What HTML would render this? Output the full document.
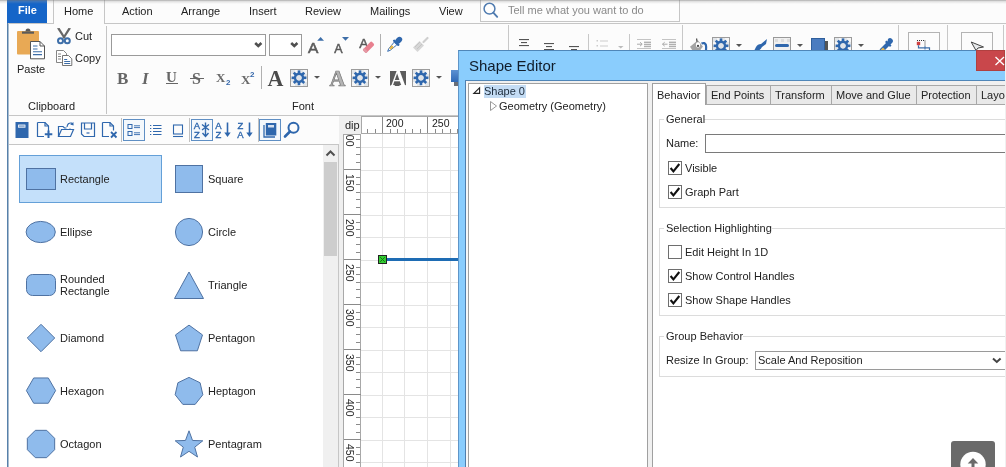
<!DOCTYPE html><html><head><meta charset="utf-8"><style>
*{box-sizing:border-box;margin:0;padding:0}
html,body{width:1006px;height:467px;overflow:hidden;background:#fcfcfc;font-family:"Liberation Sans",sans-serif;color:#222}
.a{position:absolute}
.t{position:absolute;white-space:nowrap;font-size:11px;line-height:13px;will-change:transform}
svg{position:absolute;overflow:visible;will-change:transform}
</style></head><body>
<div class="a" style="left:0px;top:0px;width:7px;height:467px;background:#fefefe"></div>
<div class="a" style="left:7px;top:23px;width:999px;height:1px;background:#c6c6c6"></div>
<div class="a" style="left:7px;top:0px;width:40px;height:23px;background:#1565c8"></div>
<div class="t" style="left:17.5px;top:5px;font-size:11px;line-height:11px;color:#fff;font-weight:bold">File</div>
<div class="a" style="left:53px;top:0px;width:52px;height:24px;background:#fcfcfc;border-left:1px solid #c6c6c6;border-right:1px solid #c6c6c6"></div>
<div class="t" style="left:63.8px;top:6px;font-size:11px;line-height:11px;">Home</div>
<div class="t" style="left:122px;top:6px;font-size:11px;line-height:11px;">Action</div>
<div class="t" style="left:181px;top:6px;font-size:11px;line-height:11px;">Arrange</div>
<div class="t" style="left:249px;top:6px;font-size:11px;line-height:11px;">Insert</div>
<div class="t" style="left:305px;top:6px;font-size:11px;line-height:11px;">Review</div>
<div class="t" style="left:370px;top:6px;font-size:11px;line-height:11px;">Mailings</div>
<div class="t" style="left:439px;top:6px;font-size:11px;line-height:11px;">View</div>
<div class="a" style="left:480px;top:0px;width:200px;height:22px;background:#fdfdfd;border:1px solid #c6c6c6;border-top:none"></div>
<svg style="left:483px;top:2px" width="18" height="18" viewBox="0 0 18 18"><circle cx="6.5" cy="6.7" r="5.4" fill="none" stroke="#4f7bb0" stroke-width="1.5"/><line x1="10.3" y1="10.6" x2="14.2" y2="14.8" stroke="#4f7bb0" stroke-width="1.9" stroke-linecap="round"/></svg>
<div class="t" style="left:507.5px;top:5px;font-size:11px;line-height:11px;color:#8a8a8a">Tell me what you want to do</div>
<div class="a" style="left:7px;top:23px;width:1px;height:444px;background:#5680aa"></div>
<div class="a" style="left:8px;top:115px;width:998px;height:1px;background:#c6c6c6"></div>
<svg style="left:15px;top:27px" width="32" height="33" viewBox="0 0 32 33"><rect x="2" y="4" width="22" height="23.6" rx="1" fill="#e8a955"/><path d="M7 4.5 h12 v2.2 h-12z" fill="#5a5a5a"/><path d="M10.5 4.5 q0-3 2.5-3 q2.5 0 2.5 3z" fill="#5a5a5a"/><path d="M15.5 14.5 h9.5 l4.5 4.5 v12.8 h-14z" fill="#fff" stroke="#555" stroke-width="1"/><path d="M25 14.5 v4.5 h4.5" fill="none" stroke="#555" stroke-width="1"/><path d="M18 19h4.5M18 22h4.5M18 24.8h9M18 27.6h9" stroke="#3d6ea8" stroke-width="1.1"/></svg>
<div class="t" style="left:17px;top:64px;font-size:11px;line-height:11px;">Paste</div>
<svg style="left:55px;top:27px" width="18" height="18" viewBox="0 0 18 18"><path d="M2 1.2 L4.6 1 L10.6 10.8 L8.8 11.8z" fill="#666"/><path d="M16 1.2 L13.4 1 L7.4 10.8 L9.2 11.8z" fill="#666"/><circle cx="5.5" cy="13.8" r="2.5" fill="none" stroke="#3d6ea8" stroke-width="2"/><circle cx="12.3" cy="13.8" r="2.5" fill="none" stroke="#3d6ea8" stroke-width="2"/></svg>
<div class="t" style="left:75px;top:31px;font-size:11px;line-height:11px;">Cut</div>
<svg style="left:55px;top:49px" width="18" height="18" viewBox="0 0 18 18"><path d="M1.5 1.5 h7 l3 3 v9 h-10z" fill="#fff" stroke="#777" stroke-width="0.9"/><path d="M3 5h3M3 7.5h3M3 10h3" stroke="#777" stroke-width="0.9"/><path d="M7.5 6.5 h6 l3.3 3.3 v6.7 h-9.3z" fill="#fff" stroke="#666" stroke-width="0.9"/><path d="M9.2 10.5h3M9.2 12.5h6M9.2 14.5h6" stroke="#3d6ea8" stroke-width="1"/></svg>
<div class="t" style="left:75px;top:53px;font-size:11px;line-height:11px;">Copy</div>
<div class="t" style="left:28px;top:101px;font-size:11px;line-height:11px;">Clipboard</div>
<div class="a" style="left:106px;top:26px;width:1px;height:88px;background:#c4c4c4"></div>
<div class="a" style="left:111px;top:34px;width:155px;height:22px;background:#fff;border:1px solid #9a9a9a"></div>
<div class="a" style="left:269px;top:34px;width:33px;height:22px;background:#fff;border:1px solid #9a9a9a"></div>
<svg style="left:254px;top:42px" width="9" height="6" viewBox="0 0 9 6"><path d="M1.2 1 L4.3 3.9 L7.4 1" fill="none" stroke="#505050" stroke-width="2.6"/></svg>
<svg style="left:290px;top:42px" width="9" height="6" viewBox="0 0 9 6"><path d="M1.2 1 L4.3 3.9 L7.4 1" fill="none" stroke="#505050" stroke-width="2.6"/></svg>
<svg style="left:306px;top:36px" width="20" height="18" viewBox="0 0 20 18"><text x="2" y="16.6" font-family="Liberation Sans" font-size="15.5" fill="#5a5a5a" stroke="#5a5a5a" stroke-width="0.6">A</text><path d="M11.2 4.8 L14.6 1 L18 4.8z" fill="#3d6ea8"/></svg>
<svg style="left:332px;top:36px" width="20" height="18" viewBox="0 0 20 18"><text x="2.2" y="16.6" font-family="Liberation Sans" font-size="12.5" fill="#5a5a5a" stroke="#5a5a5a" stroke-width="0.5">A</text><path d="M10 1 L17 1 L13.5 4.8z" fill="#3d6ea8"/></svg>
<svg style="left:357px;top:35px" width="20" height="19" viewBox="0 0 20 19"><text x="2.3" y="12.5" font-family="Liberation Sans" font-size="13.5" fill="#5a5a5a" stroke="#5a5a5a" stroke-width="0.5">A</text><g transform="translate(11.6 12.2) rotate(-45)"><rect x="-6.2" y="-2.5" width="12.4" height="5" rx="1.6" fill="#e8808f"/><rect x="-6.2" y="-2.5" width="2.6" height="5" rx="1" fill="#e49aa6"/></g></svg>
<div class="a" style="left:380px;top:34px;width:1px;height:22px;background:#b0b0b0"></div>
<svg style="left:386px;top:36px" width="17" height="17" viewBox="0 0 17 17"><g transform="translate(8.6 8.4) rotate(45)"><rect x="-2.7" y="-9.6" width="5.4" height="7.5" rx="2.7" fill="#2f67ad"/><rect x="-3.9" y="-3.4" width="7.8" height="2.2" rx="0.6" fill="#2f67ad"/><path d="M-1.9 -1.2 H1.9 L1.1 7.2 L0 9.8 L-1.1 7.2z" fill="#fff" stroke="#2f67ad" stroke-width="0.9"/><path d="M-1.5 2.5 H1.5 L1 6.6 H-1z" fill="#e6b84c"/></g></svg>
<svg style="left:411px;top:36px" width="18" height="17" viewBox="0 0 18 17"><path d="M12.5 6 L16.5 2" stroke="#cfcfcf" stroke-width="2.2" stroke-linecap="round"/><path d="M2 11.5 L8.5 5 L13 9.5 L6.5 16z" fill="#d6d6d6"/><path d="M4 11 l5-5M6 13 l5-5" stroke="#c4c4c4" stroke-width="1"/></svg>
<div class="t" style="left:116.5px;top:70px;font-family:'Liberation Serif',serif;font-size:17px;line-height:17px;font-weight:bold;color:#666">B</div>
<div class="t" style="left:142.3px;top:70px;font-family:'Liberation Serif',serif;font-size:17px;line-height:17px;font-weight:bold;font-style:italic;color:#666">I</div>
<div class="t" style="left:165.8px;top:70px;font-family:'Liberation Serif',serif;font-size:15px;line-height:15px;font-weight:bold;color:#666">U</div>
<div class="a" style="left:166px;top:83px;width:12px;height:1px;background:#666"></div>
<div class="t" style="left:192.3px;top:71px;font-family:'Liberation Serif',serif;font-size:16px;line-height:16px;font-weight:bold;color:#666">S</div>
<div class="a" style="left:190px;top:78px;width:14px;height:1px;background:#666"></div>
<div class="t" style="left:215.8px;top:71px;font-family:'Liberation Serif',serif;font-size:13px;line-height:13px;font-weight:bold;color:#6a6a6a">X</div>
<div class="t" style="left:225.5px;top:79px;font-size:8px;line-height:8px;color:#3366aa;font-weight:bold">2</div>
<div class="t" style="left:240.8px;top:73px;font-family:'Liberation Serif',serif;font-size:13px;line-height:13px;font-weight:bold;color:#6a6a6a">X</div>
<div class="t" style="left:249.5px;top:71px;font-size:8px;line-height:8px;color:#3366aa;font-weight:bold">2</div>
<div class="a" style="left:261px;top:66px;width:1px;height:23px;background:#b0b0b0"></div>
<svg style="left:266px;top:66px" width="20" height="22" viewBox="0 0 20 22"><text x="1.6" y="19.7" font-family="Liberation Serif" font-size="22" fill="#4a4a4a" transform="scale(1 1.04)" font-weight="bold">A</text></svg>
<svg style="left:290px;top:69px" width="18" height="18" viewBox="0 0 18 18"><rect x="0.5" y="0.5" width="17" height="17" fill="#f6f6f6" stroke="#9c9c9c"/><rect x="1" y="1" width="4" height="4" fill="#e2e6ea"/><rect x="1" y="9" width="4" height="4" fill="#e2e6ea"/><rect x="5" y="5" width="4" height="4" fill="#e2e6ea"/><rect x="5" y="13" width="4" height="4" fill="#e2e6ea"/><rect x="9" y="1" width="4" height="4" fill="#e2e6ea"/><rect x="9" y="9" width="4" height="4" fill="#e2e6ea"/><rect x="13" y="5" width="4" height="4" fill="#e2e6ea"/><rect x="13" y="13" width="4" height="4" fill="#e2e6ea"/><g transform="translate(9 8.8)" fill="#2f67ad"><rect x="-1.3" y="-7.4" width="2.6" height="3.8" transform="rotate(0)"/><rect x="-1.3" y="-7.4" width="2.6" height="3.8" transform="rotate(45)"/><rect x="-1.3" y="-7.4" width="2.6" height="3.8" transform="rotate(90)"/><rect x="-1.3" y="-7.4" width="2.6" height="3.8" transform="rotate(135)"/><rect x="-1.3" y="-7.4" width="2.6" height="3.8" transform="rotate(180)"/><rect x="-1.3" y="-7.4" width="2.6" height="3.8" transform="rotate(225)"/><rect x="-1.3" y="-7.4" width="2.6" height="3.8" transform="rotate(270)"/><rect x="-1.3" y="-7.4" width="2.6" height="3.8" transform="rotate(315)"/><circle r="3.9" fill="none" stroke="#2f67ad" stroke-width="2.6"/></g><circle cx="9" cy="8.8" r="2.6" fill="#dfe3e8"/></svg>
<svg style="left:314px;top:76px" width="6" height="3" viewBox="0 0 6 3"><path d="M0 0 L6 0 L3 2.8z" fill="#555"/></svg>
<svg style="left:327px;top:66px" width="20" height="22" viewBox="0 0 20 22"><text x="2.4" y="19.7" font-family="Liberation Serif" font-size="22" fill="#b4b4b4" stroke="#7a7a7a" stroke-width=".7" transform="scale(1 1.04)" font-weight="bold">A</text></svg>
<svg style="left:351px;top:69px" width="18" height="18" viewBox="0 0 18 18"><rect x="0.5" y="0.5" width="17" height="17" fill="#f6f6f6" stroke="#9c9c9c"/><rect x="1" y="1" width="4" height="4" fill="#e2e6ea"/><rect x="1" y="9" width="4" height="4" fill="#e2e6ea"/><rect x="5" y="5" width="4" height="4" fill="#e2e6ea"/><rect x="5" y="13" width="4" height="4" fill="#e2e6ea"/><rect x="9" y="1" width="4" height="4" fill="#e2e6ea"/><rect x="9" y="9" width="4" height="4" fill="#e2e6ea"/><rect x="13" y="5" width="4" height="4" fill="#e2e6ea"/><rect x="13" y="13" width="4" height="4" fill="#e2e6ea"/><g transform="translate(9 8.8)" fill="#2f67ad"><rect x="-1.3" y="-7.4" width="2.6" height="3.8" transform="rotate(0)"/><rect x="-1.3" y="-7.4" width="2.6" height="3.8" transform="rotate(45)"/><rect x="-1.3" y="-7.4" width="2.6" height="3.8" transform="rotate(90)"/><rect x="-1.3" y="-7.4" width="2.6" height="3.8" transform="rotate(135)"/><rect x="-1.3" y="-7.4" width="2.6" height="3.8" transform="rotate(180)"/><rect x="-1.3" y="-7.4" width="2.6" height="3.8" transform="rotate(225)"/><rect x="-1.3" y="-7.4" width="2.6" height="3.8" transform="rotate(270)"/><rect x="-1.3" y="-7.4" width="2.6" height="3.8" transform="rotate(315)"/><circle r="3.9" fill="none" stroke="#2f67ad" stroke-width="2.6"/></g><circle cx="9" cy="8.8" r="2.6" fill="#dfe3e8"/></svg>
<svg style="left:375px;top:76px" width="6" height="3" viewBox="0 0 6 3"><path d="M0 0 L6 0 L3 2.8z" fill="#555"/></svg>
<div class="a" style="left:390px;top:71px;width:16px;height:15px;background:#5c5c5c"></div>
<svg style="left:388px;top:66px" width="20" height="22" viewBox="0 0 20 22"><text x="2.3" y="19.7" font-family="Liberation Serif" font-size="22" fill="#fff" transform="scale(1 1.04)" font-weight="bold">A</text></svg>
<svg style="left:412px;top:69px" width="18" height="18" viewBox="0 0 18 18"><rect x="0.5" y="0.5" width="17" height="17" fill="#f6f6f6" stroke="#9c9c9c"/><rect x="1" y="1" width="4" height="4" fill="#e2e6ea"/><rect x="1" y="9" width="4" height="4" fill="#e2e6ea"/><rect x="5" y="5" width="4" height="4" fill="#e2e6ea"/><rect x="5" y="13" width="4" height="4" fill="#e2e6ea"/><rect x="9" y="1" width="4" height="4" fill="#e2e6ea"/><rect x="9" y="9" width="4" height="4" fill="#e2e6ea"/><rect x="13" y="5" width="4" height="4" fill="#e2e6ea"/><rect x="13" y="13" width="4" height="4" fill="#e2e6ea"/><g transform="translate(9 8.8)" fill="#2f67ad"><rect x="-1.3" y="-7.4" width="2.6" height="3.8" transform="rotate(0)"/><rect x="-1.3" y="-7.4" width="2.6" height="3.8" transform="rotate(45)"/><rect x="-1.3" y="-7.4" width="2.6" height="3.8" transform="rotate(90)"/><rect x="-1.3" y="-7.4" width="2.6" height="3.8" transform="rotate(135)"/><rect x="-1.3" y="-7.4" width="2.6" height="3.8" transform="rotate(180)"/><rect x="-1.3" y="-7.4" width="2.6" height="3.8" transform="rotate(225)"/><rect x="-1.3" y="-7.4" width="2.6" height="3.8" transform="rotate(270)"/><rect x="-1.3" y="-7.4" width="2.6" height="3.8" transform="rotate(315)"/><circle r="3.9" fill="none" stroke="#2f67ad" stroke-width="2.6"/></g><circle cx="9" cy="8.8" r="2.6" fill="#dfe3e8"/></svg>
<svg style="left:436px;top:76px" width="6" height="3" viewBox="0 0 6 3"><path d="M0 0 L6 0 L3 2.8z" fill="#555"/></svg>
<div class="t" style="left:291.5px;top:101px;font-size:11px;line-height:11px;">Font</div>
<div class="a" style="left:451px;top:70px;width:7px;height:12px;background:linear-gradient(#5d92d2,#2f69b6)"></div>
<div class="a" style="left:454px;top:82px;width:4px;height:4px;background:#6a6f78"></div>
<div class="a" style="left:508px;top:25px;width:1px;height:25px;background:#c8c8c8"></div>
<svg style="left:519px;top:0px" width="10" height="60" viewBox="0 0 10 60"><rect x="0.0" y="39" width="10" height="1.1" fill="#555"/><rect x="2.0" y="42" width="6" height="1.1" fill="#555"/><rect x="0.0" y="45" width="10" height="1.1" fill="#555"/></svg>
<svg style="left:544px;top:0px" width="10" height="60" viewBox="0 0 10 60"><rect x="0.0" y="43" width="10" height="1.1" fill="#555"/><rect x="2.0" y="46" width="6" height="1.1" fill="#555"/><rect x="0.0" y="49" width="10" height="1.1" fill="#555"/></svg>
<svg style="left:569px;top:0px" width="10" height="60" viewBox="0 0 10 60"><rect x="0.0" y="46" width="10" height="1.1" fill="#555"/><rect x="2.0" y="49" width="6" height="1.1" fill="#555"/></svg>
<div class="a" style="left:588px;top:34px;width:1px;height:16px;background:#c8c8c8"></div>
<svg style="left:596px;top:38px" width="13" height="12" viewBox="0 0 13 12"><rect x="0.5" y="2" width="1.5" height="1.5" fill="#ccc"/><rect x="0.5" y="7" width="1.5" height="1.5" fill="#ccc"/><rect x="4" y="2.5" width="8" height="1" fill="#ccc"/><rect x="4" y="7.5" width="8" height="1" fill="#ccc"/></svg>
<svg style="left:617.5px;top:45.5px" width="6" height="3" viewBox="0 0 6 3"><path d="M0 0 L5.5 0 L2.75 2.6z" fill="#bbb"/></svg>
<div class="a" style="left:629px;top:34px;width:1px;height:16px;background:#c8c8c8"></div>
<svg style="left:636px;top:38px" width="16" height="12" viewBox="0 0 16 12"><rect x="1" y="1" width="14" height="1" fill="#c4c4c4"/><rect x="1" y="10" width="14" height="1" fill="#c4c4c4"/><rect x="8" y="3.6" width="7" height="1.5" fill="#b0b0b0"/><rect x="8" y="5.8" width="7" height="1.5" fill="#b0b0b0"/><rect x="8" y="8" width="7" height="1.2" fill="#b0b0b0"/><path d="M1 6.2h5M4 4.2l2.2 2L4 8.2" stroke="#aaa" fill="none" stroke-width="1"/></svg>
<svg style="left:662px;top:38px" width="16" height="12" viewBox="0 0 16 12"><rect x="0" y="1" width="14" height="1" fill="#c4c4c4"/><rect x="0" y="10" width="14" height="1" fill="#c4c4c4"/><rect x="7" y="3.6" width="7" height="1.5" fill="#b0b0b0"/><rect x="7" y="5.8" width="7" height="1.5" fill="#b0b0b0"/><rect x="7" y="8" width="7" height="1.2" fill="#b0b0b0"/><path d="M0.5 6.2h5M2.7 4.2L.5 6.2l2.2 2" stroke="#aaa" fill="none" stroke-width="1"/></svg>
<div class="a" style="left:682px;top:25px;width:1px;height:25px;background:#c8c8c8"></div>
<svg style="left:684px;top:34px" width="28" height="17" viewBox="0 0 28 17"><path d="M6 12.7 L13.8 6.2 L18.9 12.4 L16 16.5 L8.5 16.5z" fill="#a4a4a4"/><ellipse cx="14" cy="11" rx="2.1" ry="2.7" fill="#fff"/><circle cx="14" cy="11.9" r="1.1" fill="#444"/><path d="M12.6 4.5 L13 7.6" stroke="#444" stroke-width="1.2"/><path d="M17.5 9.6 q3.3-1.6 4.4 1.4 q.5 2 .1 5.5" stroke="#2f67ad" stroke-width="2.2" fill="none"/></svg>
<svg style="left:712px;top:37px" width="18" height="18" viewBox="0 0 18 18"><rect x="0.5" y="0.5" width="17" height="17" fill="#f6f6f6" stroke="#9c9c9c"/><rect x="1" y="1" width="4" height="4" fill="#e2e6ea"/><rect x="1" y="9" width="4" height="4" fill="#e2e6ea"/><rect x="5" y="5" width="4" height="4" fill="#e2e6ea"/><rect x="5" y="13" width="4" height="4" fill="#e2e6ea"/><rect x="9" y="1" width="4" height="4" fill="#e2e6ea"/><rect x="9" y="9" width="4" height="4" fill="#e2e6ea"/><rect x="13" y="5" width="4" height="4" fill="#e2e6ea"/><rect x="13" y="13" width="4" height="4" fill="#e2e6ea"/><g transform="translate(9 8.8)" fill="#2f67ad"><rect x="-1.3" y="-7.4" width="2.6" height="3.8" transform="rotate(0)"/><rect x="-1.3" y="-7.4" width="2.6" height="3.8" transform="rotate(45)"/><rect x="-1.3" y="-7.4" width="2.6" height="3.8" transform="rotate(90)"/><rect x="-1.3" y="-7.4" width="2.6" height="3.8" transform="rotate(135)"/><rect x="-1.3" y="-7.4" width="2.6" height="3.8" transform="rotate(180)"/><rect x="-1.3" y="-7.4" width="2.6" height="3.8" transform="rotate(225)"/><rect x="-1.3" y="-7.4" width="2.6" height="3.8" transform="rotate(270)"/><rect x="-1.3" y="-7.4" width="2.6" height="3.8" transform="rotate(315)"/><circle r="3.9" fill="none" stroke="#2f67ad" stroke-width="2.6"/></g><circle cx="9" cy="8.8" r="2.6" fill="#dfe3e8"/></svg>
<svg style="left:736px;top:43.5px" width="6" height="3" viewBox="0 0 6 3"><path d="M0 0 L6 0 L3 3z" fill="#555"/></svg>
<svg style="left:753px;top:39px" width="15" height="12" viewBox="0 0 15 12"><path d="M14 0 L13 5 L9 8 q-2 4-6 4 H0 q2-1 3-4 q1.5-3 5-3 z" fill="#2f67ad"/></svg>
<svg style="left:773px;top:37px" width="18" height="14" viewBox="0 0 18 14"><rect x="0.5" y="0.5" width="17" height="16" fill="#f0f0f0" stroke="#999"/><rect x="2" y="2" width="3" height="3" fill="#ddd"/><rect x="8" y="2" width="3" height="3" fill="#ddd"/><rect x="14" y="2" width="3" height="3" fill="#ddd"/><rect x="2" y="7" width="14" height="3" rx="1.5" fill="#2f67ad"/></svg>
<svg style="left:797px;top:43.5px" width="6" height="3" viewBox="0 0 6 3"><path d="M0 0 L6 0 L3 3z" fill="#555"/></svg>
<svg style="left:811px;top:38px" width="18" height="13" viewBox="0 0 18 13"><rect x="13" y="3" width="4" height="12" fill="#555"/><rect x="0.5" y="0.5" width="13" height="14" fill="#4a7cc0" stroke="#2f5f9c"/></svg>
<svg style="left:834px;top:37px" width="18" height="18" viewBox="0 0 18 18"><rect x="0.5" y="0.5" width="17" height="17" fill="#f6f6f6" stroke="#9c9c9c"/><rect x="1" y="1" width="4" height="4" fill="#e2e6ea"/><rect x="1" y="9" width="4" height="4" fill="#e2e6ea"/><rect x="5" y="5" width="4" height="4" fill="#e2e6ea"/><rect x="5" y="13" width="4" height="4" fill="#e2e6ea"/><rect x="9" y="1" width="4" height="4" fill="#e2e6ea"/><rect x="9" y="9" width="4" height="4" fill="#e2e6ea"/><rect x="13" y="5" width="4" height="4" fill="#e2e6ea"/><rect x="13" y="13" width="4" height="4" fill="#e2e6ea"/><g transform="translate(9 8.8)" fill="#2f67ad"><rect x="-1.3" y="-7.4" width="2.6" height="3.8" transform="rotate(0)"/><rect x="-1.3" y="-7.4" width="2.6" height="3.8" transform="rotate(45)"/><rect x="-1.3" y="-7.4" width="2.6" height="3.8" transform="rotate(90)"/><rect x="-1.3" y="-7.4" width="2.6" height="3.8" transform="rotate(135)"/><rect x="-1.3" y="-7.4" width="2.6" height="3.8" transform="rotate(180)"/><rect x="-1.3" y="-7.4" width="2.6" height="3.8" transform="rotate(225)"/><rect x="-1.3" y="-7.4" width="2.6" height="3.8" transform="rotate(270)"/><rect x="-1.3" y="-7.4" width="2.6" height="3.8" transform="rotate(315)"/><circle r="3.9" fill="none" stroke="#2f67ad" stroke-width="2.6"/></g><circle cx="9" cy="8.8" r="2.6" fill="#dfe3e8"/></svg>
<svg style="left:858px;top:43.5px" width="6" height="3" viewBox="0 0 6 3"><path d="M0 0 L6 0 L3 3z" fill="#555"/></svg>
<svg style="left:878px;top:37px" width="15" height="15" viewBox="0 0 15 15"><path d="M10 2 q2-2 4 0 q2 2 0 4 l-1.5 1.5 1 1 -1.5 1.5 -1-1 -6 6 q-1.5 .8-2.5 .5 l-1-1 q-.3-1 .5-2.5 l6-6 -1-1 1.5-1.5 1 1z" fill="#2f67ad"/><path d="M2 13.5 l3-3 2 2 -3 3z" fill="#e8b850"/></svg>
<div class="a" style="left:898px;top:25px;width:1px;height:25px;background:#c8c8c8"></div>
<div class="a" style="left:908px;top:32px;width:32px;height:20px;background:#fcfcfc;border:1px solid #b4b4b4"></div>
<svg style="left:914px;top:38px" width="18" height="14" viewBox="0 0 18 14"><path d="M3 2.5 h8 M11 2.5 v5" stroke="#333" stroke-width="1" stroke-dasharray="1 1" fill="none"/><rect x="2.8" y="3.8" width="3.4" height="3.4" fill="#d04040"/><path d="M4.5 7.2 v2.6 h11 v3" stroke="#3d6ea8" stroke-width="1.2" fill="none"/><path d="M11 8 v3.5" stroke="#3d6ea8" stroke-width="1"/></svg>
<div class="a" style="left:947px;top:25px;width:1px;height:25px;background:#c8c8c8"></div>
<div class="a" style="left:961px;top:32px;width:32px;height:20px;background:#fcfcfc;border:1px solid #b4b4b4"></div>
<svg style="left:970px;top:41px" width="15" height="10" viewBox="0 0 15 10"><path d="M1.2 1 L13.5 6 L8 7 L6 9.5z" fill="#e8eaec" stroke="#444" stroke-width="1"/></svg>
<div class="a" style="left:1003px;top:25px;width:1px;height:25px;background:#c8c8c8"></div>
<div class="a" style="left:8px;top:144px;width:331px;height:1px;background:#c6c6c6"></div>
<svg style="left:13.6px;top:121px" width="16" height="18" viewBox="0 0 16 18"><rect x="1.5" y="1" width="13" height="16" fill="#2f67ad"/><rect x="4" y="3.5" width="7.5" height="3.2" rx=".5" fill="#fff" opacity=".85"/><rect x="5" y="4.5" width="5.5" height="1.2" fill="#2f67ad" opacity=".6"/></svg>
<svg style="left:36px;top:121px" width="18" height="18" viewBox="0 0 18 18"><path d="M1.5 1.5 h7.5 l3.5 3.5 v6.5 M8 15.5 h-6.5 v-14" fill="none" stroke="#2f67ad" stroke-width="1.2"/><path d="M9 1.5 v3.5 h3.5" fill="none" stroke="#2f67ad" stroke-width="1.2"/><path d="M12.5 9.5 v7.5 M8.8 13.2 h7.5" stroke="#2f67ad" stroke-width="2"/></svg>
<svg style="left:57px;top:121px" width="18" height="18" viewBox="0 0 18 18"><path d="M1.5 15.5 v-10 h4.5 l1.5 1.5 h2" fill="none" stroke="#2f67ad" stroke-width="1.2"/><path d="M13 8.5 v-1" fill="none" stroke="#2f67ad" stroke-width="1.2"/><path d="M1.5 15.5 l3-7 h12 l-3 7z" fill="none" stroke="#2f67ad" stroke-width="1.2"/><path d="M10 6 q0.5-4.5 4.5-4 l1.2 1.8" fill="none" stroke="#2f67ad" stroke-width="1.1"/><path d="M13.2 3.6 L16.6 4.6 L16.4 1z" fill="#2f67ad"/></svg>
<svg style="left:80px;top:121px" width="16" height="18" viewBox="0 0 16 18"><path d="M1.5 2 h13 v13.5 h-10.5 l-2.5-2.5z" fill="none" stroke="#2f67ad" stroke-width="1.2"/><path d="M4.5 2 v6 h7 v-6" fill="none" stroke="#2f67ad" stroke-width="1.2"/><path d="M6.5 12 h3" stroke="#2f67ad" stroke-width="1.2"/></svg>
<svg style="left:101px;top:121px" width="18" height="18" viewBox="0 0 18 18"><path d="M1.5 1.5 h7.5 l3.5 3.5 v4.5 M8 15.5 h-6.5 v-14" fill="none" stroke="#2f67ad" stroke-width="1.2"/><path d="M9 1.5 v3.5 h3.5" fill="none" stroke="#2f67ad" stroke-width="1.2"/><path d="M10 11 l5.5 5.5 M15.5 11 l-5.5 5.5" stroke="#2f67ad" stroke-width="1.8"/></svg>
<div class="a" style="left:121px;top:118px;width:1px;height:24px;background:#c0c0c0"></div>
<div class="a" style="left:123px;top:119px;width:22px;height:22px;background:#f4f8fc;border:1px solid #5f8fc4"></div>
<svg style="left:127px;top:123px" width="14" height="14" viewBox="0 0 14 14"><rect x="1" y="1.5" width="4" height="4" fill="none" stroke="#2f67ad" stroke-width="1"/><rect x="1" y="8.5" width="4" height="4" fill="none" stroke="#2f67ad" stroke-width="1"/><path d="M7 2.8h6M7 4.6h6M7 9.8h6M7 11.6h6" stroke="#2f67ad" stroke-width=".9"/></svg>
<svg style="left:149px;top:123px" width="14" height="14" viewBox="0 0 14 14"><path d="M1 2.5h1.3M1 5.5h1.3M1 8.5h1.3M1 11.5h1.3M4 2.5h8.5M4 5.5h8.5M4 8.5h8.5M4 11.5h8.5" stroke="#2f67ad" stroke-width="1"/></svg>
<svg style="left:172px;top:124px" width="12" height="14" viewBox="0 0 12 14"><rect x="1.5" y="1" width="9" height="9" fill="none" stroke="#2f67ad" stroke-width="1.1"/><path d="M1 12.5h10" stroke="#2f67ad" stroke-width="1.1"/></svg>
<div class="a" style="left:189px;top:118px;width:1px;height:24px;background:#c0c0c0"></div>
<div class="a" style="left:191px;top:119px;width:22px;height:22px;background:#f4f8fc;border:1px solid #5f8fc4"></div>
<svg style="left:193px;top:121px" width="18" height="18" viewBox="0 0 18 18"><text x="0.8" y="8.2" font-family="Liberation Sans" font-size="9.5" fill="#2f67ad" stroke="#2f67ad" stroke-width="0.35">A</text><text x="1" y="17" font-family="Liberation Sans" font-size="9.5" fill="#2f67ad" stroke="#2f67ad" stroke-width="0.35">Z</text><path d="M12.5 1.5 v14 M9.5 12 l3 3.5 3-3.5 M9 3.5 l7 5.5 M16 3.5 l-7 5.5" stroke="#2f67ad" stroke-width="1.4" fill="none"/></svg>
<svg style="left:215px;top:121px" width="16" height="18" viewBox="0 0 16 18"><text x="0.3" y="8.2" font-family="Liberation Sans" font-size="9.5" fill="#2f67ad" stroke="#2f67ad" stroke-width="0.35">A</text><text x="0.5" y="17" font-family="Liberation Sans" font-size="9.5" fill="#2f67ad" stroke="#2f67ad" stroke-width="0.35">Z</text><path d="M12.5 1.5 v11" stroke="#2f67ad" stroke-width="1.6"/><path d="M9.3 11.5 h6.4 l-3.2 4.5z" fill="#2f67ad"/></svg>
<svg style="left:237px;top:121px" width="18" height="18" viewBox="0 0 18 18"><text x="0.5" y="8.2" font-family="Liberation Sans" font-size="9.5" fill="#2f67ad" stroke="#2f67ad" stroke-width="0.35">Z</text><text x="0.3" y="17" font-family="Liberation Sans" font-size="9.5" fill="#2f67ad" stroke="#2f67ad" stroke-width="0.35">A</text><path d="M12.5 1.5 v11" stroke="#2f67ad" stroke-width="1.6"/><path d="M9.3 11.5 h6.4 l-3.2 4.5z" fill="#2f67ad"/></svg>
<div class="a" style="left:258px;top:118px;width:1px;height:24px;background:#c0c0c0"></div>
<div class="a" style="left:259px;top:119px;width:22px;height:22px;background:#f4f8fc;border:1px solid #5f8fc4"></div>
<svg style="left:262px;top:122px" width="16" height="16" viewBox="0 0 16 16"><path d="M2 3 v12 h11" fill="none" stroke="#2f67ad" stroke-width="1.3"/><rect x="3.8" y="1" width="10.5" height="12.5" fill="#2f67ad"/><rect x="6" y="3" width="6" height="2.5" fill="#fff" opacity=".8"/></svg>
<svg style="left:283px;top:121px" width="18" height="18" viewBox="0 0 18 18"><circle cx="10.5" cy="6.8" r="5" fill="none" stroke="#2f67ad" stroke-width="2"/><path d="M7 10.5 L2 15.5" stroke="#2f67ad" stroke-width="2.6" stroke-linecap="round"/></svg>
<div class="a" style="left:8px;top:145px;width:330px;height:322px;background:#fff"></div>
<div class="a" style="left:338px;top:144px;width:1px;height:323px;background:#c6c6c6"></div>
<div class="a" style="left:323px;top:145px;width:15px;height:322px;background:#f0f0f0"></div>
<svg style="left:325px;top:149px" width="11" height="8" viewBox="0 0 11 8"><path d="M1.5 6.5 L5.5 2.5 L9.5 6.5" fill="none" stroke="#505050" stroke-width="2"/></svg>
<div class="a" style="left:324px;top:162px;width:13px;height:94px;background:#cdcdcd"></div>
<div class="a" style="left:19px;top:155px;width:143px;height:48px;background:#c4e0fa;border:1px solid #64a0d8"></div>
<svg style="left:25px;top:162.8px" width="32" height="32" viewBox="0 0 32 32"><rect x="1.5" y="5.5" width="29" height="21" fill="#8fbbec" stroke="#4f72a2" stroke-width="1"/></svg>
<svg style="left:172.7px;top:162.8px" width="32" height="32" viewBox="0 0 32 32"><rect x="2.5" y="2.5" width="27" height="27" fill="#8fbbec" stroke="#4f72a2" stroke-width="1"/></svg>
<svg style="left:25px;top:215.8px" width="32" height="32" viewBox="0 0 32 32"><ellipse cx="15.7" cy="16" rx="14.6" ry="10.6" fill="#8fbbec" stroke="#4f72a2" stroke-width="1"/></svg>
<svg style="left:172.7px;top:215.8px" width="32" height="32" viewBox="0 0 32 32"><circle cx="16" cy="16" r="13.6" fill="#8fbbec" stroke="#4f72a2" stroke-width="1"/></svg>
<svg style="left:25px;top:268.8px" width="32" height="32" viewBox="0 0 32 32"><rect x="1.5" y="5.5" width="29" height="21" rx="6" fill="#8fbbec" stroke="#4f72a2" stroke-width="1"/></svg>
<svg style="left:172.7px;top:268.8px" width="32" height="32" viewBox="0 0 32 32"><path d="M16 3 L30.5 29.5 H1.5z" fill="#8fbbec" stroke="#4f72a2" stroke-width="1"/></svg>
<svg style="left:25px;top:321.8px" width="32" height="32" viewBox="0 0 32 32"><path d="M16 2.3 L29.7 16 L16 29.7 L2.3 16z" fill="#8fbbec" stroke="#4f72a2" stroke-width="1"/></svg>
<svg style="left:172.7px;top:321.8px" width="32" height="32" viewBox="0 0 32 32"><polygon points="16.00,3.10 29.51,12.91 24.35,28.79 7.65,28.79 2.49,12.91" fill="#8fbbec" stroke="#4f72a2" stroke-width="1"/></svg>
<svg style="left:25px;top:374.8px" width="32" height="32" viewBox="0 0 32 32"><polygon points="30.60,15.60 23.30,28.24 8.70,28.24 1.40,15.60 8.70,2.96 23.30,2.96" fill="#8fbbec" stroke="#4f72a2" stroke-width="1"/></svg>
<svg style="left:172.7px;top:374.8px" width="32" height="32" viewBox="0 0 32 32"><polygon points="16.00,2.40 27.10,7.75 29.84,19.76 22.16,29.39 9.84,29.39 2.16,19.76 4.90,7.75" fill="#8fbbec" stroke="#4f72a2" stroke-width="1"/></svg>
<svg style="left:25px;top:427.8px" width="32" height="32" viewBox="0 0 32 32"><polygon points="29.67,21.66 21.66,29.67 10.34,29.67 2.33,21.66 2.33,10.34 10.34,2.33 21.66,2.33 29.67,10.34" fill="#8fbbec" stroke="#4f72a2" stroke-width="1"/></svg>
<svg style="left:172.7px;top:427.8px" width="32" height="32" viewBox="0 0 32 32"><polygon points="16.00,2.80 19.53,12.45 29.79,12.82 21.71,19.15 24.52,29.03 16.00,23.30 7.48,29.03 10.29,19.15 2.21,12.82 12.47,12.45" fill="#8fbbec" stroke="#4f72a2" stroke-width="1"/></svg>
<div class="t" style="left:60px;top:174px;font-size:11px;line-height:11px;">Rectangle</div>
<div class="t" style="left:207.8px;top:174px;font-size:11px;line-height:11px;">Square</div>
<div class="t" style="left:60px;top:227px;font-size:11px;line-height:11px;">Ellipse</div>
<div class="t" style="left:207.8px;top:227px;font-size:11px;line-height:11px;">Circle</div>
<div class="t" style="left:207.8px;top:280px;font-size:11px;line-height:11px;">Triangle</div>
<div class="t" style="left:60px;top:333px;font-size:11px;line-height:11px;">Diamond</div>
<div class="t" style="left:207.8px;top:333px;font-size:11px;line-height:11px;">Pentagon</div>
<div class="t" style="left:60px;top:386px;font-size:11px;line-height:11px;">Hexagon</div>
<div class="t" style="left:207.8px;top:386px;font-size:11px;line-height:11px;">Heptagon</div>
<div class="t" style="left:60px;top:439px;font-size:11px;line-height:11px;">Octagon</div>
<div class="t" style="left:207.8px;top:439px;font-size:11px;line-height:11px;">Pentagram</div>
<div class="t" style="left:60px;top:274px;font-size:11px;line-height:11px;">Rounded</div>
<div class="t" style="left:60px;top:286px;font-size:11px;line-height:11px;">Rectangle</div>
<div class="a" style="left:339px;top:116px;width:119px;height:351px;background:#efefef"></div>
<div class="a" style="left:361px;top:134px;width:97px;height:333px;background:#fff"></div>
<div class="a" style="left:382px;top:134px;width:1px;height:333px;background:#e4e4e4"></div>
<div class="a" style="left:404px;top:134px;width:1px;height:333px;background:#e4e4e4"></div>
<div class="a" style="left:427px;top:134px;width:1px;height:333px;background:#e4e4e4"></div>
<div class="a" style="left:450px;top:134px;width:1px;height:333px;background:#e4e4e4"></div>
<div class="a" style="left:361px;top:147px;width:97px;height:1px;background:#e4e4e4"></div>
<div class="a" style="left:361px;top:170px;width:97px;height:1px;background:#e4e4e4"></div>
<div class="a" style="left:361px;top:192px;width:97px;height:1px;background:#e4e4e4"></div>
<div class="a" style="left:361px;top:215px;width:97px;height:1px;background:#e4e4e4"></div>
<div class="a" style="left:361px;top:237px;width:97px;height:1px;background:#e4e4e4"></div>
<div class="a" style="left:361px;top:260px;width:97px;height:1px;background:#e4e4e4"></div>
<div class="a" style="left:361px;top:282px;width:97px;height:1px;background:#e4e4e4"></div>
<div class="a" style="left:361px;top:305px;width:97px;height:1px;background:#e4e4e4"></div>
<div class="a" style="left:361px;top:327px;width:97px;height:1px;background:#e4e4e4"></div>
<div class="a" style="left:361px;top:350px;width:97px;height:1px;background:#e4e4e4"></div>
<div class="a" style="left:361px;top:372px;width:97px;height:1px;background:#e4e4e4"></div>
<div class="a" style="left:361px;top:395px;width:97px;height:1px;background:#e4e4e4"></div>
<div class="a" style="left:361px;top:417px;width:97px;height:1px;background:#e4e4e4"></div>
<div class="a" style="left:361px;top:440px;width:97px;height:1px;background:#e4e4e4"></div>
<div class="a" style="left:361px;top:462px;width:97px;height:1px;background:#e4e4e4"></div>
<div class="a" style="left:361px;top:116px;width:97px;height:18px;background:#fff;border-top:1px solid #a8a8a8;border-left:1px solid #a8a8a8;border-bottom:1px solid #a8a8a8"></div>
<div class="a" style="left:367px;top:129px;width:1px;height:4px;background:#8a8a8a"></div>
<div class="a" style="left:375px;top:129px;width:1px;height:4px;background:#8a8a8a"></div>
<div class="a" style="left:382px;top:117px;width:1px;height:16px;background:#8a8a8a"></div>
<div class="a" style="left:390px;top:129px;width:1px;height:4px;background:#8a8a8a"></div>
<div class="a" style="left:397px;top:129px;width:1px;height:4px;background:#8a8a8a"></div>
<div class="a" style="left:405px;top:129px;width:1px;height:4px;background:#8a8a8a"></div>
<div class="a" style="left:412px;top:129px;width:1px;height:4px;background:#8a8a8a"></div>
<div class="a" style="left:420px;top:129px;width:1px;height:4px;background:#8a8a8a"></div>
<div class="a" style="left:427px;top:117px;width:1px;height:16px;background:#8a8a8a"></div>
<div class="a" style="left:435px;top:129px;width:1px;height:4px;background:#8a8a8a"></div>
<div class="a" style="left:442px;top:129px;width:1px;height:4px;background:#8a8a8a"></div>
<div class="a" style="left:450px;top:129px;width:1px;height:4px;background:#8a8a8a"></div>
<div class="a" style="left:457px;top:129px;width:1px;height:4px;background:#8a8a8a"></div>
<div class="t" style="left:386px;top:118px;font-size:10.5px;line-height:10.5px;">200</div>
<div class="t" style="left:431.5px;top:118px;font-size:10.5px;line-height:10.5px;">250</div>
<div class="a" style="left:343px;top:134px;width:18px;height:333px;background:#fff;border-left:1px solid #a8a8a8;border-right:1px solid #a8a8a8"></div>
<div class="a" style="left:356px;top:139px;width:4px;height:1px;background:#8a8a8a"></div>
<div class="a" style="left:356px;top:147px;width:4px;height:1px;background:#8a8a8a"></div>
<div class="a" style="left:356px;top:154px;width:4px;height:1px;background:#8a8a8a"></div>
<div class="a" style="left:356px;top:162px;width:4px;height:1px;background:#8a8a8a"></div>
<div class="a" style="left:344px;top:169px;width:17px;height:1px;background:#8a8a8a"></div>
<div class="a" style="left:356px;top:177px;width:4px;height:1px;background:#8a8a8a"></div>
<div class="a" style="left:356px;top:184px;width:4px;height:1px;background:#8a8a8a"></div>
<div class="a" style="left:356px;top:192px;width:4px;height:1px;background:#8a8a8a"></div>
<div class="a" style="left:356px;top:199px;width:4px;height:1px;background:#8a8a8a"></div>
<div class="a" style="left:356px;top:207px;width:4px;height:1px;background:#8a8a8a"></div>
<div class="a" style="left:344px;top:214px;width:17px;height:1px;background:#8a8a8a"></div>
<div class="a" style="left:356px;top:222px;width:4px;height:1px;background:#8a8a8a"></div>
<div class="a" style="left:356px;top:229px;width:4px;height:1px;background:#8a8a8a"></div>
<div class="a" style="left:356px;top:237px;width:4px;height:1px;background:#8a8a8a"></div>
<div class="a" style="left:356px;top:244px;width:4px;height:1px;background:#8a8a8a"></div>
<div class="a" style="left:356px;top:252px;width:4px;height:1px;background:#8a8a8a"></div>
<div class="a" style="left:344px;top:259px;width:17px;height:1px;background:#8a8a8a"></div>
<div class="a" style="left:356px;top:267px;width:4px;height:1px;background:#8a8a8a"></div>
<div class="a" style="left:356px;top:274px;width:4px;height:1px;background:#8a8a8a"></div>
<div class="a" style="left:356px;top:282px;width:4px;height:1px;background:#8a8a8a"></div>
<div class="a" style="left:356px;top:289px;width:4px;height:1px;background:#8a8a8a"></div>
<div class="a" style="left:356px;top:297px;width:4px;height:1px;background:#8a8a8a"></div>
<div class="a" style="left:344px;top:304px;width:17px;height:1px;background:#8a8a8a"></div>
<div class="a" style="left:356px;top:312px;width:4px;height:1px;background:#8a8a8a"></div>
<div class="a" style="left:356px;top:319px;width:4px;height:1px;background:#8a8a8a"></div>
<div class="a" style="left:356px;top:327px;width:4px;height:1px;background:#8a8a8a"></div>
<div class="a" style="left:356px;top:334px;width:4px;height:1px;background:#8a8a8a"></div>
<div class="a" style="left:356px;top:342px;width:4px;height:1px;background:#8a8a8a"></div>
<div class="a" style="left:344px;top:349px;width:17px;height:1px;background:#8a8a8a"></div>
<div class="a" style="left:356px;top:357px;width:4px;height:1px;background:#8a8a8a"></div>
<div class="a" style="left:356px;top:364px;width:4px;height:1px;background:#8a8a8a"></div>
<div class="a" style="left:356px;top:372px;width:4px;height:1px;background:#8a8a8a"></div>
<div class="a" style="left:356px;top:379px;width:4px;height:1px;background:#8a8a8a"></div>
<div class="a" style="left:356px;top:387px;width:4px;height:1px;background:#8a8a8a"></div>
<div class="a" style="left:344px;top:394px;width:17px;height:1px;background:#8a8a8a"></div>
<div class="a" style="left:356px;top:402px;width:4px;height:1px;background:#8a8a8a"></div>
<div class="a" style="left:356px;top:409px;width:4px;height:1px;background:#8a8a8a"></div>
<div class="a" style="left:356px;top:417px;width:4px;height:1px;background:#8a8a8a"></div>
<div class="a" style="left:356px;top:424px;width:4px;height:1px;background:#8a8a8a"></div>
<div class="a" style="left:356px;top:432px;width:4px;height:1px;background:#8a8a8a"></div>
<div class="a" style="left:344px;top:439px;width:17px;height:1px;background:#8a8a8a"></div>
<div class="a" style="left:356px;top:447px;width:4px;height:1px;background:#8a8a8a"></div>
<div class="a" style="left:356px;top:454px;width:4px;height:1px;background:#8a8a8a"></div>
<div class="a" style="left:356px;top:462px;width:4px;height:1px;background:#8a8a8a"></div>
<div class="t" style="left:354.5px;top:128.8px;font-size:10.5px;line-height:10.5px;transform-origin:0 0;transform:rotate(90deg)">100</div>
<div class="t" style="left:354.5px;top:173.8px;font-size:10.5px;line-height:10.5px;transform-origin:0 0;transform:rotate(90deg)">150</div>
<div class="t" style="left:354.5px;top:218.8px;font-size:10.5px;line-height:10.5px;transform-origin:0 0;transform:rotate(90deg)">200</div>
<div class="t" style="left:354.5px;top:263.8px;font-size:10.5px;line-height:10.5px;transform-origin:0 0;transform:rotate(90deg)">250</div>
<div class="t" style="left:354.5px;top:308.8px;font-size:10.5px;line-height:10.5px;transform-origin:0 0;transform:rotate(90deg)">300</div>
<div class="t" style="left:354.5px;top:353.8px;font-size:10.5px;line-height:10.5px;transform-origin:0 0;transform:rotate(90deg)">350</div>
<div class="t" style="left:354.5px;top:398.8px;font-size:10.5px;line-height:10.5px;transform-origin:0 0;transform:rotate(90deg)">400</div>
<div class="t" style="left:354.5px;top:443.8px;font-size:10.5px;line-height:10.5px;transform-origin:0 0;transform:rotate(90deg)">450</div>
<div class="a" style="left:339px;top:116px;width:22px;height:18px;background:#efefef"></div>
<div class="t" style="left:345px;top:120px;font-size:11px;line-height:11px;">dip</div>
<div class="a" style="left:343px;top:134px;width:18px;height:1px;background:#a8a8a8"></div>
<div class="a" style="left:386px;top:258px;width:72px;height:3px;background:#1e6cb4"></div>
<div class="a" style="left:378px;top:255px;width:9px;height:9px;background:#33cc33;border:1px solid #222"></div>
<svg style="left:379px;top:256px" width="7" height="7" viewBox="0 0 7 7"><path d="M1.2 1.2 L5.8 5.8 M5.8 1.2 L1.2 5.8" stroke="#117711" stroke-width="1"/></svg>
<div class="a" style="left:458px;top:50px;width:548px;height:417px;background:#8acdfd;border-left:1px solid #5f95c8;border-top:1px solid #4f86b8"></div>
<div class="t" style="left:469px;top:56.5px;font-size:15px;line-height:17px;color:#111d2b">Shape Editor</div>
<div class="a" style="left:976px;top:50px;width:29px;height:21px;background:#c9474b;border:1px solid #b04040"></div>
<svg style="left:990px;top:54px" width="16" height="14" viewBox="0 0 16 14"><path d="M5.5 3 L14 11 M14 3 L5.5 11" stroke="#fff" stroke-width="1.3"/></svg>
<div class="a" style="left:465px;top:80px;width:541px;height:387px;background:#f0f0f0;border-top:1px solid #4f86b8;border-left:1px solid #4f7fae"></div>
<div class="a" style="left:468px;top:83px;width:180px;height:394px;background:#fff;border:1px solid #a0a0a0"></div>
<div class="a" style="left:466px;top:81px;width:2px;height:386px;background:#f8f8f8"></div>
<div class="a" style="left:484px;top:85px;width:42px;height:13px;background:#c4dcf4"></div>
<svg style="left:473px;top:87px" width="8" height="8" viewBox="0 0 8 8"><path d="M6.6 0.8 V6.4 H0.8z" fill="none" stroke="#222" stroke-width="1.1" stroke-linejoin="miter"/></svg>
<div class="t" style="left:484px;top:86px;font-size:11px;line-height:11px;color:#1b2a3a">Shape 0</div>
<svg style="left:489px;top:100px" width="9" height="12" viewBox="0 0 9 12"><path d="M1.5 1.5 L7.5 6 L1.5 10.5z" fill="#fff" stroke="#999" stroke-width="1"/></svg>
<div class="t" style="left:499px;top:101px;font-size:11px;line-height:11px;">Geometry (Geometry)</div>
<div class="a" style="left:652px;top:104px;width:354px;height:363px;background:#fff;border-left:1px solid #a0a0a0;border-top:1px solid #a0a0a0"></div>
<div class="a" style="left:705.5px;top:85px;width:65.0px;height:20px;background:#e9e9e9;border:1px solid #a8a8a8"></div>
<div class="t" style="left:711.0px;top:90px;font-size:11px;line-height:11px;">End Points</div>
<div class="a" style="left:769.5px;top:85px;width:62.5px;height:20px;background:#e9e9e9;border:1px solid #a8a8a8"></div>
<div class="t" style="left:775.0px;top:90px;font-size:11px;line-height:11px;">Transform</div>
<div class="a" style="left:831px;top:85px;width:85.5px;height:20px;background:#e9e9e9;border:1px solid #a8a8a8"></div>
<div class="t" style="left:835.6px;top:90px;font-size:11px;line-height:11px;">Move and Glue</div>
<div class="a" style="left:915.5px;top:85px;width:61.5px;height:20px;background:#e9e9e9;border:1px solid #a8a8a8"></div>
<div class="t" style="left:921.0px;top:90px;font-size:11px;line-height:11px;">Protection</div>
<div class="a" style="left:976px;top:85px;width:55px;height:20px;background:#e9e9e9;border:1px solid #a8a8a8"></div>
<div class="t" style="left:980.8px;top:90px;font-size:11px;line-height:11px;">Layout</div>
<div class="a" style="left:652px;top:83px;width:54px;height:22px;background:#fff;border:1px solid #a0a0a0;border-bottom:none"></div>
<div class="t" style="left:657px;top:90px;font-size:11px;line-height:11px;">Behavior</div>
<div class="a" style="left:659px;top:119px;width:360px;height:89px;border:1px solid #dcdcdc"></div>
<div class="a" style="left:664px;top:113px;width:40px;height:12px;background:#fff"></div>
<div class="t" style="left:666px;top:114px;font-size:11px;line-height:11px;">General</div>
<div class="a" style="left:659px;top:228px;width:360px;height:88px;border:1px solid #dcdcdc"></div>
<div class="a" style="left:664px;top:222px;width:108px;height:12px;background:#fff"></div>
<div class="t" style="left:666px;top:223px;font-size:11px;line-height:11px;">Selection Highlighting</div>
<div class="a" style="left:659px;top:336px;width:360px;height:41px;border:1px solid #dcdcdc"></div>
<div class="a" style="left:664px;top:330px;width:79px;height:12px;background:#fff"></div>
<div class="t" style="left:666px;top:331px;font-size:11px;line-height:11px;">Group Behavior</div>
<div class="t" style="left:666px;top:138px;font-size:11px;line-height:11px;">Name:</div>
<div class="a" style="left:705px;top:134px;width:310px;height:19px;background:#fff;border:1px solid #7a7a7a"></div>
<div class="a" style="left:668px;top:161px;width:14px;height:14px;background:#fff;border:1px solid #6e6e6e"></div>
<svg style="left:668px;top:161px" width="14" height="14" viewBox="0 0 14 14"><path d="M2.6 7 L5.4 10.4 L11.3 3" fill="none" stroke="#111" stroke-width="2.1"/></svg>
<div class="t" style="left:684.8px;top:163px;font-size:11px;line-height:11px;">Visible</div>
<div class="a" style="left:668px;top:185px;width:14px;height:14px;background:#fff;border:1px solid #6e6e6e"></div>
<svg style="left:668px;top:185px" width="14" height="14" viewBox="0 0 14 14"><path d="M2.6 7 L5.4 10.4 L11.3 3" fill="none" stroke="#111" stroke-width="2.1"/></svg>
<div class="t" style="left:684.8px;top:187px;font-size:11px;line-height:11px;">Graph Part</div>
<div class="a" style="left:668px;top:245px;width:14px;height:14px;background:#fff;border:1px solid #6e6e6e"></div>
<div class="t" style="left:684.8px;top:247px;font-size:11px;line-height:11px;">Edit Height In 1D</div>
<div class="a" style="left:668px;top:269px;width:14px;height:14px;background:#fff;border:1px solid #6e6e6e"></div>
<svg style="left:668px;top:269px" width="14" height="14" viewBox="0 0 14 14"><path d="M2.6 7 L5.4 10.4 L11.3 3" fill="none" stroke="#111" stroke-width="2.1"/></svg>
<div class="t" style="left:684.8px;top:271px;font-size:11px;line-height:11px;">Show Control Handles</div>
<div class="a" style="left:668px;top:293px;width:14px;height:14px;background:#fff;border:1px solid #6e6e6e"></div>
<svg style="left:668px;top:293px" width="14" height="14" viewBox="0 0 14 14"><path d="M2.6 7 L5.4 10.4 L11.3 3" fill="none" stroke="#111" stroke-width="2.1"/></svg>
<div class="t" style="left:684.8px;top:295px;font-size:11px;line-height:11px;">Show Shape Handles</div>
<div class="t" style="left:666px;top:355px;font-size:11px;line-height:11px;">Resize In Group:</div>
<div class="a" style="left:755px;top:351px;width:260px;height:19px;background:#fff;border:1px solid #9a9a9a"></div>
<div class="t" style="left:757.6px;top:355px;font-size:11px;line-height:11px;">Scale And Reposition</div>
<svg style="left:992px;top:357px" width="10" height="7" viewBox="0 0 10 7"><path d="M1 1.5 L4.8 5 L8.6 1.5" fill="none" stroke="#444" stroke-width="2"/></svg>
<div class="a" style="left:951px;top:441px;width:44px;height:30px;background:#6a6a6a;border-radius:3px"></div>
<svg style="left:958px;top:449px" width="30" height="22" viewBox="0 0 30 22"><circle cx="15" cy="15.5" r="12.7" fill="#fff"/><path d="M15 9 L9.7 14.6 h3.8 v8 h3 v-8 h3.8z" fill="#6a6a6a"/></svg>
<div class="a" style="left:1005px;top:50px;width:1px;height:417px;background:#f0f0f0"></div>
<div class="a" style="left:0px;top:0px;width:1006px;height:4px;background:linear-gradient(rgba(120,120,120,.6),rgba(160,160,160,.25) 40%,rgba(250,250,250,0))"></div>
<div class="a" style="left:8px;top:24px;width:1px;height:443px;background:#a8bccf"></div>
</body></html>
